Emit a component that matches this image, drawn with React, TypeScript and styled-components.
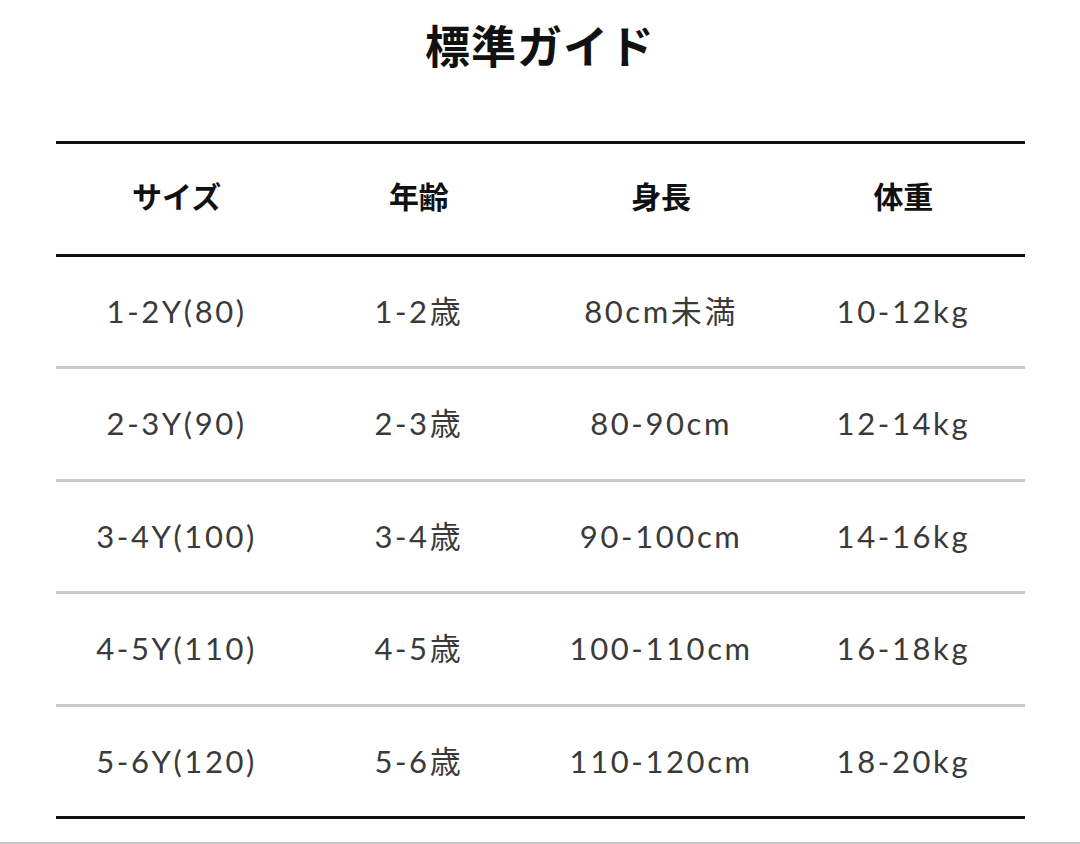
import React from 'react'
import styled, { createGlobalStyle } from 'styled-components'

const GlobalStyle = createGlobalStyle`
  html, body {
    margin: 0;
    padding: 0;
    background: #ffffff;
  }
  body {
    font-family: Lato, "Noto Sans CJK JP", sans-serif;
  }
`

const Page = styled.div`
  width: 1080px;
  height: 844px;
  box-sizing: border-box;
  display: flex;
  flex-direction: column;
  align-items: center;
  border-bottom: 2px solid #c4c4c4;
  overflow: hidden;
`

const Title = styled.h1`
  margin: 17px 0 0;
  height: 56px;
  font-family: "Noto Sans CJK JP", sans-serif;
  font-size: 45px;
  font-weight: 700;
  line-height: 56px;
  color: #111;
  letter-spacing: 1px;
`

const Table = styled.div`
  margin-top: 68px;
  width: 969px;
  display: flex;
  flex-direction: column;
  border-top: 3px solid #111;
`

const Row = styled.div<{ $head?: boolean; $last?: boolean }>`
  display: grid;
  grid-template-columns: repeat(4, 1fr);
  align-items: center;
  height: 109.5px;
  border-bottom: 3px solid ${p => (p.$head || p.$last ? '#111' : '#c9c9c9')};
`

const Cell = styled.div<{ $head?: boolean }>`
  text-align: center;
  font-family: ${p =>
    p.$head ? '"Noto Sans CJK JP", sans-serif' : 'Lato, "Noto Sans CJK JP", sans-serif'};
  font-size: ${p => (p.$head ? '30px' : '31px')};
  font-weight: ${p => (p.$head ? 700 : 400)};
  color: ${p => (p.$head ? '#111' : '#3a3a3a')};
  letter-spacing: ${p => (p.$head ? '0' : '2.6px')};
  line-height: 1;
  padding-bottom: ${p => (p.$head ? '7px' : '0')};
`

const headers = ['サイズ', '年齢', '身長', '体重']

const rows = [
  ['1-2Y(80)', '1-2歳', '80cm未満', '10-12kg'],
  ['2-3Y(90)', '2-3歳', '80-90cm', '12-14kg'],
  ['3-4Y(100)', '3-4歳', '90-100cm', '14-16kg'],
  ['4-5Y(110)', '4-5歳', '100-110cm', '16-18kg'],
  ['5-6Y(120)', '5-6歳', '110-120cm', '18-20kg'],
]

export default function App() {
  return (
    <Page>
      <GlobalStyle />
      <Title>標準ガイド</Title>
      <Table>
        <Row $head>
          {headers.map(h => (
            <Cell key={h} $head>
              {h}
            </Cell>
          ))}
        </Row>
        {rows.map((r, i) => (
          <Row key={r[0]} $last={i === rows.length - 1}>
            {r.map(c => (
              <Cell key={c}>{c}</Cell>
            ))}
          </Row>
        ))}
      </Table>
    </Page>
  )
}
